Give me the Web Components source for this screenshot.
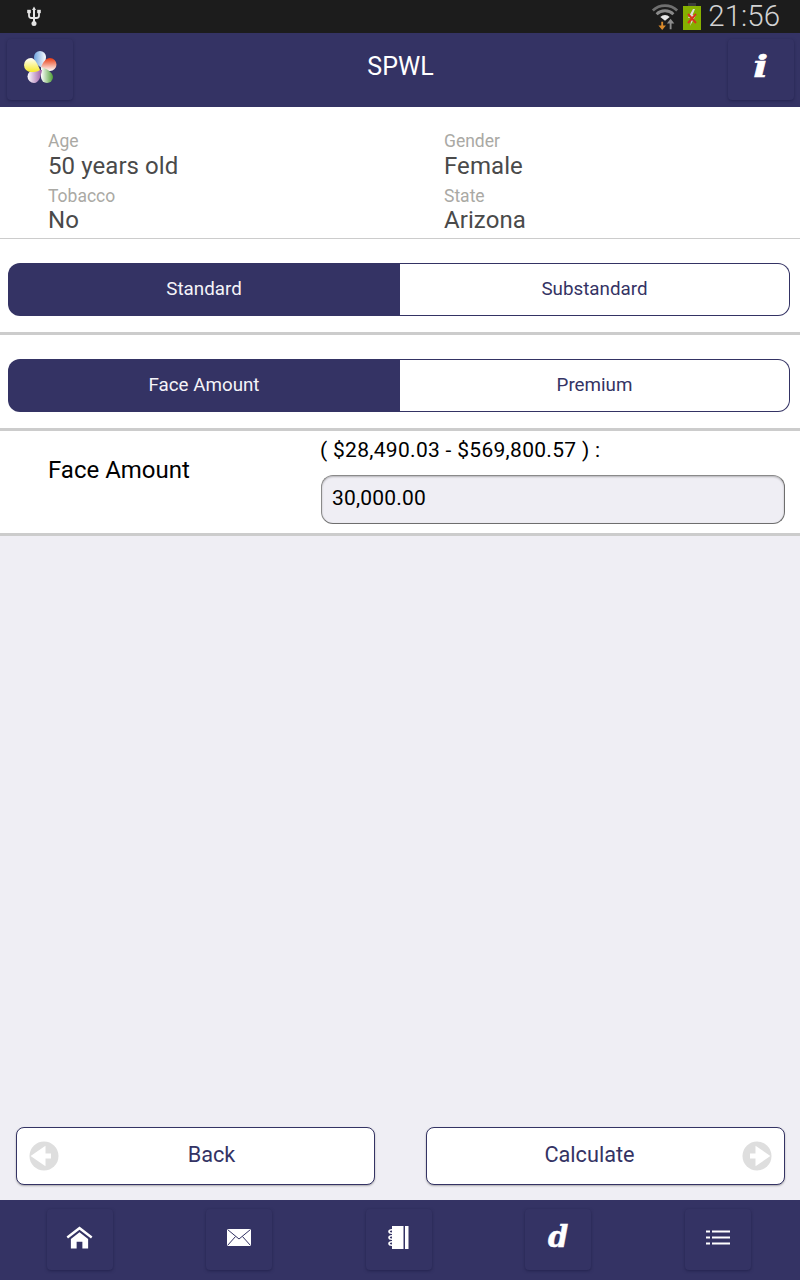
<!DOCTYPE html>
<html>
<head>
<meta charset="utf-8">
<title>SPWL</title>
<style>
html, body { margin: 0; padding: 0; height: 1280px; background: #efeef4; font-family: Roboto, sans-serif; }
</style>
</head>
<body>
<spwl-app></spwl-app>
<script>
const NAVY = '#343364';

// Status bar at the very top
class StatusBar extends HTMLElement {
    constructor() {
        super();
        this.attachShadow({ mode: 'open' }).innerHTML = `
        <style>
            :host { display: flex; align-items: center; height: 33px; background: #1c1c1c; color: #d2d2d2; padding: 0 20px 0 27px; box-sizing: border-box; }
            .usb { display: block; margin-top: 0; }
            .grow { flex: 1; }
            .wifi { display: block; margin-right: 4px; }
            .batt { display: block; margin-right: 7px; }
            .time { font: 300 29.5px/33px Roboto, sans-serif; }
        </style>
        <svg class="usb" width="14" height="21" viewBox="0 0 14 21">
            <path d="M7 .5 L5 4 H6 V16 H8 V4 H9 Z" fill="#e4e4e4"/>
            <path d="M2 6 V9.500 Q2 12 4.500 12 H9.500 Q12 12 12 9.500 V6.500" fill="none" stroke="#e4e4e4" stroke-width="1.800"/>
            <rect x="0.2" y="3.800" width="3.600" height="3.400" fill="#e4e4e4"/><rect x="10.200" y="3.800" width="3.600" height="3.400" fill="#e4e4e4"/>
            <circle cx="7" cy="17.500" r="2.500" fill="#e4e4e4"/>
        </svg>
        <span class="grow"></span>
        <svg class="wifi" width="28" height="29" viewBox="0 0 28 31">
            <path d="M1 9 A19 19 0 0 1 27 9" fill="none" stroke="#6f6f6f" stroke-width="3"/>
            <path d="M5 13 A13 13 0 0 1 23 13" fill="none" stroke="#8a8a8a" stroke-width="3"/>
            <path d="M9 16 A7 7 0 0 1 19 16 L14 20 Z" fill="#e8e8e8"/>
            <path d="M10 21 V25 H7 L11 30 L15 25 H12 V21 Z" fill="#d98a2b"/>
            <path d="M19 29 V23 H16 L20 18 L24 23 H21 V29 Z" fill="#8d8d8d"/>
        </svg>
        <svg class="batt" width="18" height="27" viewBox="0 0 18 27">
            <rect x="5" y="0" width="8" height="3" fill="#3a3a3a"/>
            <rect x="0" y="3" width="18" height="24" fill="#86b000"/>
            <path d="M10 6 L5 15 H9 L7 23 L13 12 H9.500 L12 6 Z" fill="#ddd"/>
            <path d="M5 11 L13 20 M13 11 L5 20" stroke="#d8331c" stroke-width="2"/>
        </svg>
        <span class="time">21:56</span>`;
    }
}

// Square button used in the header and the footer
class IconButton extends HTMLElement {
    constructor() {
        super();
        this.attachShadow({ mode: 'open' }).innerHTML = `
        <style>
            :host { display: flex; align-items: center; justify-content: center; width: 66px; height: 61px; padding-bottom: 4px; box-sizing: border-box; background: ${NAVY}; border-radius: 4px; box-shadow: 0 1px 3px rgba(20,20,60,.5); color: #fff; }
            ::slotted(svg) { display: block; }
            ::slotted(span) { font: italic 700 29px/1 "DejaVu Serif", serif; color: #fff; -webkit-text-stroke: .5px #fff; }
        </style>
        <slot></slot>`;
    }
}

class AppHeader extends HTMLElement {
    constructor() {
        super();
        this.attachShadow({ mode: 'open' }).innerHTML = `
        <style>
            :host { display: flex; justify-content: space-between; align-items: center; height: 74px; padding: 0 6px 1px 7px; box-sizing: border-box; background: ${NAVY}; }
            .title { font: 400 25px/1 Roboto, sans-serif; color: #fff; margin-top: -6px; }
            icon-button { margin-top: -1px; }
        </style>
        <icon-button><slot name="left"></slot></icon-button>
        <span class="title"><slot name="title"></slot></span>
        <icon-button><slot name="right"></slot></icon-button>`;
    }
}

class InfoField extends HTMLElement {
    constructor() {
        super();
        this.attachShadow({ mode: 'open' }).innerHTML = `
        <style>
            :host { display: block; }
            .l { font: 400 17.500px/20px Roboto, sans-serif; color: #aaa9a4; height: 20px; }
            .v { font: 400 24px/30px Roboto, sans-serif; color: #4a4a4a; letter-spacing: .08px; height: 30px; margin-top: var(--shift, 0); }
        </style>
        <div class="l">${this.getAttribute('label')}</div>
        <div class="v">${this.getAttribute('value')}</div>`;
    }
}

class InfoPanel extends HTMLElement {
    constructor() {
        super();
        this.attachShadow({ mode: 'open' }).innerHTML = `
        <style>
            :host { display: grid; grid-template-columns: 396px 1fr; grid-auto-rows: 55px; height: 132px; padding: 24px 0 0 48px; box-sizing: border-box; background: #fff; border-bottom: 1px solid #ccc; }
        </style>
        <slot></slot>`;
    }
}

// Two part toggle, first half selected
class SegmentToggle extends HTMLElement {
    constructor() {
        super();
        this.attachShadow({ mode: 'open' }).innerHTML = `
        <style>
            :host { display: flex; width: 782px; height: 53px; margin-left: 8px; box-sizing: border-box; font: 400 18.800px/1 Roboto, sans-serif; }
            div { display: flex; align-items: center; justify-content: center; box-sizing: border-box; padding-top: 1px; padding-bottom: 2px; }
            .on { width: 392px; background: ${NAVY}; color: #f4f4f8; border-radius: 12px 0 0 12px; }
            .off { flex: 1; background: #fff; color: ${NAVY}; border: 1px solid ${NAVY}; border-left: 0; border-radius: 0 12px 12px 0; }
        </style>
        <div class="on">${this.getAttribute('first')}</div>
        <div class="off">${this.getAttribute('second')}</div>`;
    }
}

class ToggleRow extends HTMLElement {
    constructor() {
        super();
        this.attachShadow({ mode: 'open' }).innerHTML = `
        <style>
            :host { display: block; background: #fff; padding-top: 24px; height: 96px; box-sizing: border-box; border-bottom: 3px solid #ccc; }
        </style>
        <slot></slot>`;
    }
}

class AmountRow extends HTMLElement {
    constructor() {
        super();
        this.attachShadow({ mode: 'open' }).innerHTML = `
        <style>
            :host { display: flex; height: 105px; box-sizing: border-box; background: #fff; border-bottom: 3px solid #ccc; color: #000; }
            .name { width: 320px; padding: 24px 0 0 48px; box-sizing: border-box; font: 400 24px/30px Roboto, sans-serif; }
            .range { font: 400 21px/24px Roboto, sans-serif; padding-top: 7px; height: 37px; box-sizing: border-box; white-space: pre; letter-spacing: .3px; }
            .box { width: 464px; height: 49px; box-sizing: border-box; margin: 7px 0 0 1px; padding-left: 10px; border: 1px solid #8a8a8a; border-bottom-color: #6e6e6e; border-right-color: #6e6e6e; border-radius: 12px; background: #efeef4; box-shadow: inset 0 1px 2px rgba(0,0,0,.25); font: 400 21px/45px Roboto, sans-serif; letter-spacing: .2px; }
        </style>
        <div class="name">Face Amount</div>
        <div>
            <div class="range">( $28,490.03 - $569,800.57 ) :</div>
            <div class="box">30,000.00</div>
        </div>`;
    }
}

// Back / Calculate button, arrow attribute gives the side of the icon
class NavButton extends HTMLElement {
    constructor() {
        super();
        const right = this.getAttribute('arrow') === 'right';
        const shaft = right ? 'M8 15 H16 V9.500 L24 15 L16 20.500 V15' : 'M22 15 H14 V9.500 L6 15 L14 20.500 V15';
        this.attachShadow({ mode: 'open' }).innerHTML = `
        <style>
            :host { display: flex; align-items: center; justify-content: center; position: relative; width: 359px; height: 58px; box-sizing: border-box; background: #fff; border: 1px solid ${NAVY}; border-radius: 8px; box-shadow: 0 1px 2px rgba(0,0,0,.3); color: ${NAVY}; font: 400 21.700px/1 Roboto, sans-serif; padding-bottom: 3px; padding-${right ? 'right' : 'left'}: 32px; }
            svg { position: absolute; top: 13px; ${right ? 'right: 12px' : 'left: 12px'}; }
        </style>
        <svg width="30" height="30" viewBox="0 0 30 30">
            <circle cx="15" cy="15" r="14.500" fill="#dedede"/>
            <path d="${shaft}" fill="#fff" stroke="#fff" stroke-width="5" stroke-linejoin="miter"/>
        </svg>
        <slot></slot>`;
    }
}

class AppFooter extends HTMLElement {
    constructor() {
        super();
        this.attachShadow({ mode: 'open' }).innerHTML = `
        <style>
            :host { display: grid; grid-template-columns: repeat(5, 159.500px); height: 80px; padding-top: 9px; box-sizing: border-box; background: ${NAVY}; justify-items: center; }
        </style>
        <slot></slot>`;
    }
}

class SpwlApp extends HTMLElement {
    constructor() {
        super();
        this.attachShadow({ mode: 'open' }).innerHTML = `
        <style>
            :host { display: flex; flex-direction: column; height: 1280px; }
            .grow { flex: 1; }
            .nav { display: flex; justify-content: space-between; padding: 0 15px 15px 16px; }
            .logo { margin-top: -1px; }
            .info { display: inline-block; transform: scaleX(1.3); font: italic 700 30px/1 "DejaVu Serif", serif; color: #fff; -webkit-text-stroke: .6px #fff; }
            .raised { --shift: -1px; }
        </style>
        <status-bar></status-bar>
        <app-header>
            <svg slot="left" class="logo" width="34" height="34" viewBox="0 0 34 34">
                <defs>
                    <linearGradient id="pBlue" x1="0" x2="1"><stop offset="0" stop-color="#6fa3de"/><stop offset="1" stop-color="#fff"/></linearGradient>
                    <linearGradient id="pRed" x1="0" x2="0" y1="0" y2="1"><stop offset="0" stop-color="#e8380f"/><stop offset="1" stop-color="#fff"/></linearGradient>
                    <linearGradient id="pGreen" x1="1" x2="0"><stop offset="0" stop-color="#4f9e36"/><stop offset="1" stop-color="#fff"/></linearGradient>
                    <linearGradient id="pPurple" x1="1" x2="0"><stop offset="0" stop-color="#9c5ba5"/><stop offset="1" stop-color="#fff"/></linearGradient>
                    <linearGradient id="pYellow" x1="0" x2="0" y1="1" y2="0"><stop offset="0" stop-color="#f6ea2c"/><stop offset="1" stop-color="#fff"/></linearGradient>
                </defs>
                <path d="M19 18 C13 15 11 11 11 7 A6 6 0 0 1 23 7 C23 11 21 15 19 18 Z" fill="url(#pBlue)"/>
                <path d="M18 17 C20 12 23 8 27 8 A6.500 6.500 0 0 1 27 21 C24 21 21 19 18 17 Z" fill="url(#pRed)"/>
                <path d="M18 17 C22 18 30 22 30 27 A6 6 0 0 1 18 27 C18 24 18 20 18 17 Z" fill="url(#pGreen)"/>
                <path d="M19 20 C18 26 16 33 11 33 A6.500 6.500 0 0 1 11 20 C14 20 17 20 19 20 Z" fill="url(#pPurple)"/>
                <path d="M17 20 C14 22 11 22 8 22 A7 7 0 0 1 8 8 C12 8 15 15 17 20 Z" fill="url(#pYellow)"/>
            </svg>
            <span slot="title">SPWL</span>
            <span slot="right" class="info">i</span>
        </app-header>
        <info-panel>
            <info-field label="Age" value="50 years old"></info-field>
            <info-field label="Gender" value="Female"></info-field>
            <info-field class="raised" label="Tobacco" value="No"></info-field>
            <info-field class="raised" label="State" value="Arizona"></info-field>
        </info-panel>
        <toggle-row><segment-toggle first="Standard" second="Substandard"></segment-toggle></toggle-row>
        <toggle-row><segment-toggle first="Face Amount" second="Premium"></segment-toggle></toggle-row>
        <amount-row></amount-row>
        <div class="grow"></div>
        <div class="nav">
            <nav-button arrow="left">Back</nav-button>
            <nav-button arrow="right">Calculate</nav-button>
        </div>
        <app-footer>
            <icon-button>
                <svg width="27" height="23" viewBox="0 0 28 24"><path d="M14 0.500 L0.500 11 L2 13 L14 4 L26 13 L27.500 11 Z M5 13.500 L14 6.500 L23 13.500 V23.500 H17 V16.500 H11 V23.500 H5 Z" fill="#fff"/></svg>
            </icon-button>
            <icon-button>
                <svg width="24" height="17" viewBox="0 0 24 17"><rect width="24" height="17" fill="#fff"/><path d="M0.500 0.500 L12 10 L23.500 0.500 M0.500 16.500 L8.500 7.500 M23.500 16.500 L15.500 7.500" fill="none" stroke="${NAVY}" stroke-width="1"/></svg>
            </icon-button>
            <icon-button>
                <svg width="21" height="23" viewBox="0 0 21 23"><rect x="4" y="0" width="11.500" height="23" fill="#fff"/><rect x="17" y="0" width="3.500" height="23" fill="#fff"/><g fill="none" stroke="#fff" stroke-width="1.600"><ellipse cx="4" cy="5.500" rx="3" ry="1.700"/><ellipse cx="4" cy="11.500" rx="3" ry="1.700"/><ellipse cx="4" cy="17.500" rx="3" ry="1.700"/></g></svg>
            </icon-button>
            <icon-button><span>d</span></icon-button>
            <icon-button>
                <svg width="24" height="15" viewBox="0 0 24 15" fill="#fff"><rect x="0" y="0.500" width="4" height="2"/><rect x="6" y="0.500" width="18" height="2"/><rect x="0" y="6.500" width="4" height="2"/><rect x="6" y="6.500" width="18" height="2"/><rect x="0" y="12.500" width="4" height="2"/><rect x="6" y="12.500" width="18" height="2"/></svg>
            </icon-button>
        </app-footer>`;
    }
}

customElements.define('status-bar', StatusBar);
customElements.define('icon-button', IconButton);
customElements.define('app-header', AppHeader);
customElements.define('info-field', InfoField);
customElements.define('info-panel', InfoPanel);
customElements.define('segment-toggle', SegmentToggle);
customElements.define('toggle-row', ToggleRow);
customElements.define('amount-row', AmountRow);
customElements.define('nav-button', NavButton);
customElements.define('app-footer', AppFooter);
customElements.define('spwl-app', SpwlApp);
</script>
</body>
</html>
